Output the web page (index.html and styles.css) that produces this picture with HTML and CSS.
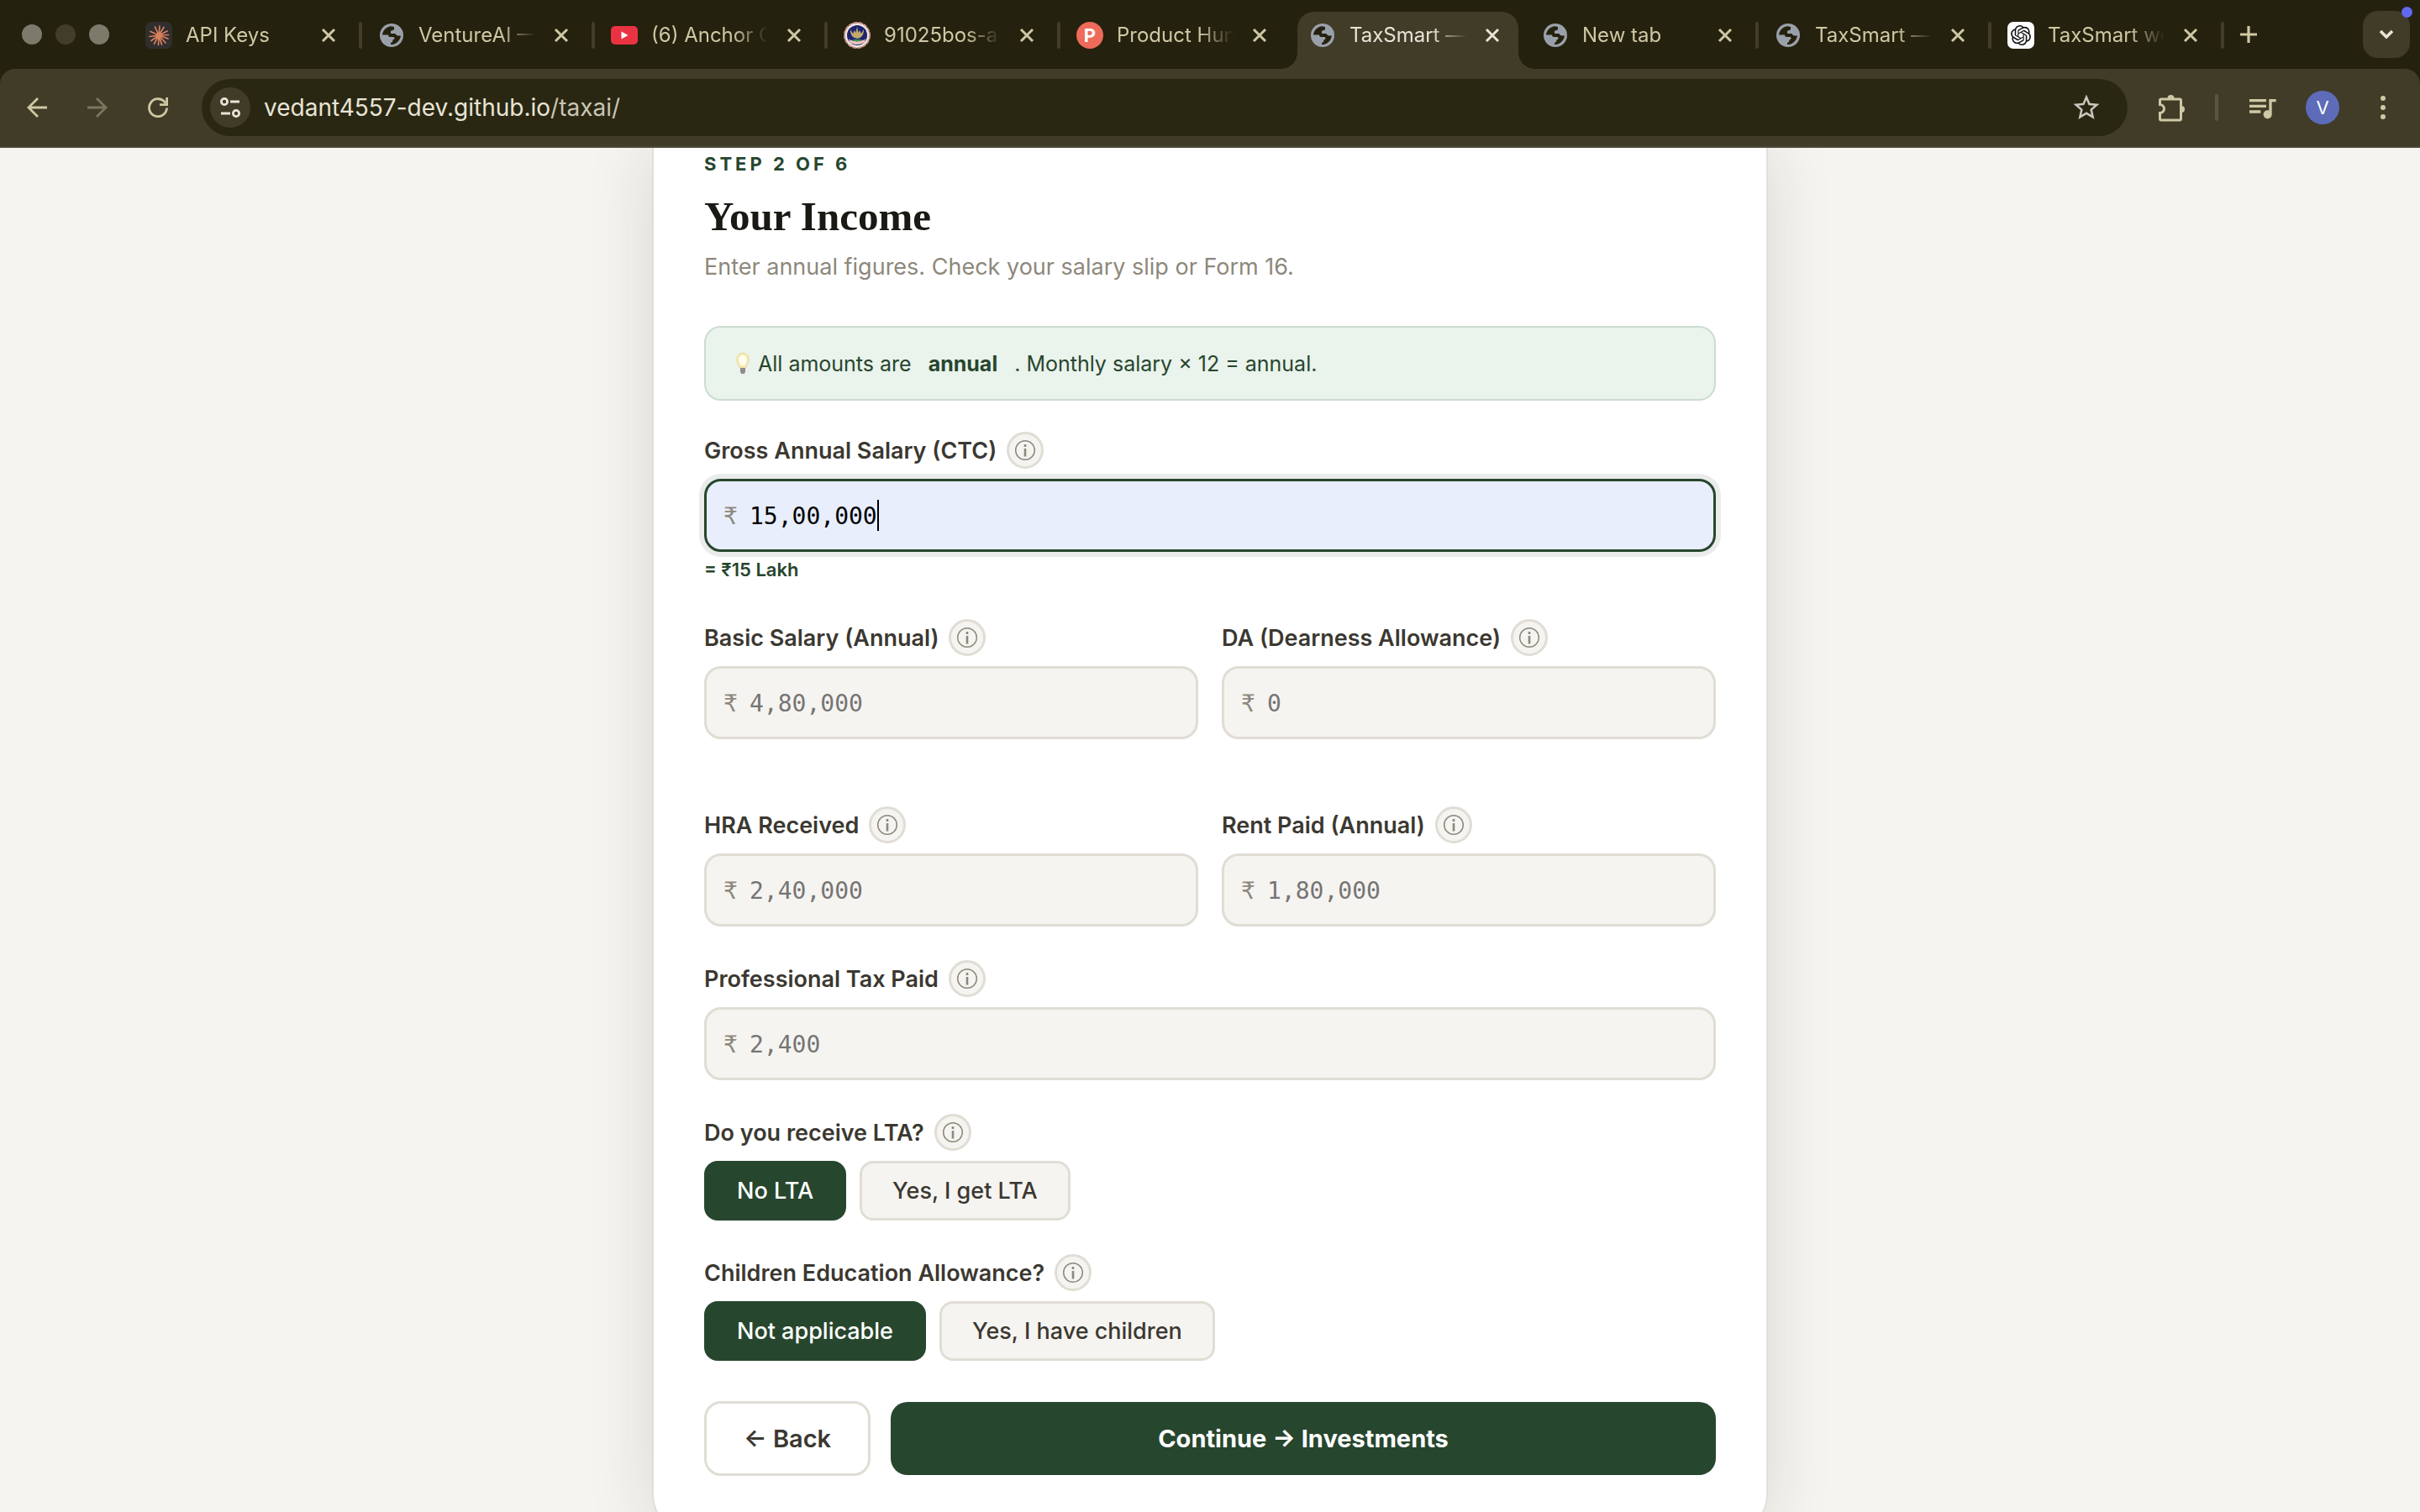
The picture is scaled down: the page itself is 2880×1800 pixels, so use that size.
FILE: index.html
```
<!DOCTYPE html>
<html lang="en">
<head>
<meta charset="utf-8">
<title>TaxSmart — Your Income</title>
<link rel="stylesheet" href="styles.css">
</head>
<body>
<svg class="symbols" aria-hidden="true">
  <symbol id="globe" viewBox="0 0 28 28">
    <circle cx="14" cy="14" r="14" fill="#9aa0a9"/>
    <path class="sea" d="M3 13.500C3.500 8 8 3.500 13.500 3.200L17 4v2.500c0 1.200-1 1.500-2.600 1.700-1.300.2-1.400 1-1.400 2.300 0 1 .2 1.500 1.200 1.500h4.300c.6 1.500 1.500 2.500 3.500 2.500h3c-.6 5-4.500 9.600-10 10.500h-2v-2.300c2-.3 2.300-1 2.300-2.500 0-1.200 2.300-1 2.300-2.700 0-1.300-1.300-1.500-2.600-1.500H12c-1 0-2-.8-2-2.500z"/>
  </symbol>
  <symbol id="close" viewBox="0 0 28 28"><path d="M7 7l14 14M21 7L7 21" stroke="currentColor" stroke-width="3" fill="none"/></symbol>
  <symbol id="info" viewBox="0 0 26 26"><circle cx="13" cy="13" r="11.300" fill="none" stroke="currentColor" stroke-width="1.500"/><path d="M13 11v9.500M13 6v3" stroke="currentColor" stroke-width="2.600"/></symbol>
</svg>

<header class="browser">
  <div class="tabstrip">
    <div class="lights"><span></span><span class="dim"></span><span></span></div>
    <nav class="tabs" aria-label="Tabs">
      <div class="tab">
        <svg class="favicon" viewBox="0 0 32 32"><rect width="32" height="32" rx="7" fill="#302f2e"/><g stroke="#d9805f" stroke-width="1.700" stroke-linecap="round"><path d="M16 16L17 5M16 16L22 6.500M16 16L26 11M16 16L27.500 15.500M16 16L27 20M16 16L24 25M16 16L19.500 27M16 16L15.500 27.500M16 16L10.500 26M16 16L7 22.500M16 16L5 17.500M16 16L6 11.500M16 16L11.500 6"/></g><circle cx="16" cy="16" r="3" fill="#d9805f"/></svg>
        <span class="tab-title">API Keys</span>
        <button class="tab-close" aria-label="Close tab"><svg><use href="#close"/></svg></button>
      </div>
      <div class="tab">
        <svg class="favicon globe"><use href="#globe"/></svg>
        <span class="tab-title">VentureAI —</span>
        <button class="tab-close" aria-label="Close tab"><svg><use href="#close"/></svg></button>
      </div>
      <div class="tab">
        <svg class="favicon" viewBox="0 0 32 32"><rect y="5" width="32" height="22" rx="5" fill="#ea3342"/><path d="M12.500 11.500v9l8-4.500z" fill="#fff"/></svg>
        <span class="tab-title">(6) Anchor C</span>
        <button class="tab-close" aria-label="Close tab"><svg><use href="#close"/></svg></button>
      </div>
      <div class="tab">
        <svg class="favicon" viewBox="0 0 32 32"><circle cx="16" cy="16" r="15" fill="#f3e9e6" stroke="#c99a90" stroke-width="2" stroke-dasharray="5 1"/><circle cx="16" cy="16" r="12" fill="#1c2470"/><path d="M8 9c0 6 2 10 8 11 6-1 8-5 8-11l-3 5-2-4-1.500 3L16 5.500l-1.500 7.500-1.500-3-2 4z" fill="#c2ab6c"/><path d="M6 20c3 4 17 4 20 0l-1 4c-5 4-13 4-18 0z" fill="#eec3bb"/><path d="M10 21h12l-6 3z" fill="#3e9a50"/></svg>
        <span class="tab-title">91025bos-a</span>
        <button class="tab-close" aria-label="Close tab"><svg><use href="#close"/></svg></button>
      </div>
      <div class="tab before-active">
        <span class="favicon hunt">P</span>
        <span class="tab-title">Product Hun</span>
        <button class="tab-close" aria-label="Close tab"><svg><use href="#close"/></svg></button>
      </div>
      <div class="tab active">
        <svg class="favicon globe"><use href="#globe"/></svg>
        <span class="tab-title">TaxSmart —</span>
        <button class="tab-close" aria-label="Close tab"><svg><use href="#close"/></svg></button>
      </div>
      <div class="tab">
        <svg class="favicon globe"><use href="#globe"/></svg>
        <span class="tab-title">New tab</span>
        <button class="tab-close" aria-label="Close tab"><svg><use href="#close"/></svg></button>
      </div>
      <div class="tab">
        <svg class="favicon globe"><use href="#globe"/></svg>
        <span class="tab-title">TaxSmart —</span>
        <button class="tab-close" aria-label="Close tab"><svg><use href="#close"/></svg></button>
      </div>
      <div class="tab">
        <svg class="favicon" viewBox="0 0 32 32"><rect width="32" height="32" rx="7" fill="#fff"/><svg x="4" y="4" width="24" height="24" viewBox="0 0 24 24"><path fill="#111" d="M22.2819 9.8211a5.9847 5.9847 0 0 0-.5157-4.9108 6.0462 6.0462 0 0 0-6.5098-2.9A6.0651 6.0651 0 0 0 4.9807 4.1818a5.9847 5.9847 0 0 0-3.9977 2.9 6.0462 6.0462 0 0 0 .7427 7.0966 5.98 5.98 0 0 0 .511 4.9107 6.051 6.051 0 0 0 6.5146 2.9001A5.9847 5.9847 0 0 0 13.2599 24a6.0557 6.0557 0 0 0 5.7718-4.2058 5.9894 5.9894 0 0 0 3.9977-2.9001 6.0557 6.0557 0 0 0-.7475-7.0729zm-9.022 12.6081a4.4755 4.4755 0 0 1-2.8764-1.0408l.1419-.0804 4.7783-2.7582a.7948.7948 0 0 0 .3927-.6813v-6.7369l2.02 1.1686a.071.071 0 0 1 .038.052v5.5826a4.504 4.504 0 0 1-4.4945 4.4944zm-9.6607-4.1254a4.4708 4.4708 0 0 1-.5346-3.0137l.142.0852 4.783 2.7582a.7712.7712 0 0 0 .7806 0l5.8428-3.3685v2.3324a.0804.0804 0 0 1-.0332.0615L9.74 19.9502a4.4992 4.4992 0 0 1-6.1408-1.6464zM2.3408 7.8956a4.485 4.485 0 0 1 2.3655-1.9728V11.6a.7664.7664 0 0 0 .3879.6765l5.8144 3.3543-2.0201 1.1685a.0757.0757 0 0 1-.071 0l-4.8303-2.7865A4.504 4.504 0 0 1 2.3408 7.872zm16.5963 3.8558L13.1038 8.364 15.1192 7.2a.0757.0757 0 0 1 .071 0l4.8303 2.7913a4.4944 4.4944 0 0 1-.6765 8.1042v-5.6772a.79.79 0 0 0-.407-.667zm2.0107-3.0231l-.142-.0852-4.7735-2.7818a.7759.7759 0 0 0-.7854 0L9.409 9.2297V6.8974a.0662.0662 0 0 1 .0284-.0615l4.8303-2.7866a4.4992 4.4992 0 0 1 6.6802 4.66zM8.3065 12.863l-2.02-1.1638a.0804.0804 0 0 1-.038-.0567V6.0742a4.4992 4.4992 0 0 1 7.3757-3.4537l-.142.0805L8.704 5.459a.7948.7948 0 0 0-.3927.6813zm1.0976-2.3654l2.602-1.4998 2.6069 1.4998v2.9994l-2.5974 1.4997-2.6067-1.4997Z"/></svg></svg>
        <span class="tab-title">TaxSmart we</span>
        <button class="tab-close" aria-label="Close tab"><svg><use href="#close"/></svg></button>
      </div>
    </nav>
    <button class="new-tab" aria-label="New tab"><svg viewBox="0 0 24 24"><path d="M12 2v20M2 12h20" stroke="currentColor" stroke-width="3.200"/></svg></button>
    <button class="tab-search" aria-label="Search tabs"><svg viewBox="0 0 20 20"><path d="M3 6l7 7 7-7" stroke="currentColor" stroke-width="3.600" fill="none"/></svg></button>
  </div>

  <div class="toolbar">
    <div class="nav-buttons">
      <button class="tool" aria-label="Back"><svg viewBox="0 0 24 24"><path d="M24 12H2M13 1L2 12l11 11" fill="none" stroke="currentColor" stroke-width="2.800"/></svg></button>
      <button class="tool faded" aria-label="Forward"><svg viewBox="0 0 24 24"><path d="M0 12h22M11 1l11 11-11 11" fill="none" stroke="currentColor" stroke-width="2.800"/></svg></button>
      <button class="tool" aria-label="Reload"><svg viewBox="0 0 24 24"><path d="M22.500 12.500A10.500 10.500 0 1 1 21 6.800" fill="none" stroke="currentColor" stroke-width="2.800"/><path d="M14 8.600h8.600V0" fill="none" stroke="currentColor" stroke-width="2.800"/></svg></button>
    </div>
    <div class="omnibox">
      <button class="site-info" aria-label="Site information"><svg viewBox="0 0 26 26" fill="none" stroke="currentColor" stroke-width="2.800"><circle cx="6" cy="6" r="3.600"/><path d="M13 6h11M2 20h11"/><circle cx="20" cy="20" r="3.600"/></svg></button>
      <a class="url" href="#">vedant4557-dev.github.io<span>/taxai/</span></a>
      <button class="star" aria-label="Bookmark"><svg viewBox="1 1 22 22"><path fill="currentColor" d="M22 9.240l-7.190-.62L12 2 9.190 8.630 2 9.240l5.460 4.730L5.820 21 12 17.270 18.180 21l-1.630-7.030L22 9.240zM12 15.400l-3.760 2.270 1-4.280-3.320-2.880 4.380-.38L12 6.100l1.710 4.040 4.380.38-3.320 2.880 1 4.280L12 15.400z"/></svg></button>
    </div>
    <button class="tool" aria-label="Extensions"><svg class="ext" viewBox="0 0 34 34"><path d="M5 7h22a1.500 1.500 0 0 1 1.500 1.500v22A1.500 1.500 0 0 1 27 32H5a1.500 1.500 0 0 1-1.500-1.500V23.500a5 5 0 0 0 0-10V8.500A1.500 1.500 0 0 1 5 7z" fill="none" stroke="currentColor" stroke-width="3"/><path d="M12.500 6a4 4 0 0 1 8 0zM29 15a4 4 0 0 1 0 8z" fill="currentColor"/></svg></button>
    <span class="divider"></span>
    <button class="tool" aria-label="Media"><svg class="media" viewBox="2 3 20 18"><path fill="currentColor" d="M15 6H3v2h12V6zm0 4H3v2h12v-2zM3 16h8v-2H3v2zM17 6v8.180c-.31-.11-.65-.18-1-.18-1.660 0-3 1.340-3 3s1.340 3 3 3 3-1.340 3-3V8h3V6h-5z"/></svg></button>
    <button class="avatar">V</button>
    <button class="tool" aria-label="Menu"><svg class="dots" viewBox="0 0 8 28"><g fill="currentColor"><circle cx="4" cy="3" r="3"/><circle cx="4" cy="14" r="3"/><circle cx="4" cy="25" r="3"/></g></svg></button>
  </div>
</header>

<main class="page">
  <form class="card">
    <p class="step">STEP 2 OF 6</p>
    <h1>Your Income</h1>
    <p class="lead">Enter annual figures. Check your salary slip or Form 16.</p>

    <div class="notice">
      <span class="notice-item"><svg class="bulb" viewBox="0 0 16 26"><path d="M8 .5C3.500.5 1 4 1 8c0 4 3 6 3.500 10h7C12 14 15 12 15 8c0-4-2.500-7.500-7-7.500z" fill="#fbeeb6" stroke="#e6d48e"/><ellipse cx="8" cy="9" rx="4.500" ry="6" fill="#fffdf0"/><path d="M5 18h6v5l-1.500 2h-3L5 23z" fill="#8f8e8c"/></svg> All amounts are</span>
      <strong>annual</strong>
      <span>. Monthly salary × 12 = annual.</span>
    </div>

    <div class="field">
      <div class="label-row"><label for="gross">Gross Annual Salary (CTC)</label><button type="button" class="info" aria-label="About gross salary"><svg><use href="#info"/></svg></button></div>
      <div class="money focused"><span class="rupee">₹</span><input id="gross" type="text" value="15,00,000"><span class="caret"></span></div>
      <p class="hint">= ₹15 Lakh</p>
    </div>

    <div class="pair">
      <div class="field">
        <div class="label-row"><label for="basic">Basic Salary (Annual)</label><button type="button" class="info" aria-label="About basic salary"><svg><use href="#info"/></svg></button></div>
        <div class="money"><span class="rupee">₹</span><input id="basic" type="text" placeholder="4,80,000"></div>
        <p class="hint"></p>
      </div>
      <div class="field">
        <div class="label-row"><label for="da">DA (Dearness Allowance)</label><button type="button" class="info" aria-label="About dearness allowance"><svg><use href="#info"/></svg></button></div>
        <div class="money"><span class="rupee">₹</span><input id="da" type="text" placeholder="0"></div>
      </div>
    </div>

    <div class="pair">
      <div class="field">
        <div class="label-row"><label for="hra">HRA Received</label><button type="button" class="info" aria-label="About HRA"><svg><use href="#info"/></svg></button></div>
        <div class="money"><span class="rupee">₹</span><input id="hra" type="text" placeholder="2,40,000"></div>
      </div>
      <div class="field">
        <div class="label-row"><label for="rent">Rent Paid (Annual)</label><button type="button" class="info" aria-label="About rent paid"><svg><use href="#info"/></svg></button></div>
        <div class="money"><span class="rupee">₹</span><input id="rent" type="text" placeholder="1,80,000"></div>
      </div>
    </div>

    <div class="field">
      <div class="label-row"><label for="ptax">Professional Tax Paid</label><button type="button" class="info" aria-label="About professional tax"><svg><use href="#info"/></svg></button></div>
      <div class="money"><span class="rupee">₹</span><input id="ptax" type="text" placeholder="2,400"></div>
    </div>

    <div class="field" role="group" aria-labelledby="lta-label">
      <div class="label-row"><span class="label" id="lta-label">Do you receive LTA?</span><button type="button" class="info" aria-label="About LTA"><svg><use href="#info"/></svg></button></div>
      <div class="choices"><button type="button" class="choice selected">No LTA</button><button type="button" class="choice">Yes, I get LTA</button></div>
    </div>

    <div class="field" role="group" aria-labelledby="cea-label">
      <div class="label-row"><span class="label" id="cea-label">Children Education Allowance?</span><button type="button" class="info" aria-label="About education allowance"><svg><use href="#info"/></svg></button></div>
      <div class="choices"><button type="button" class="choice selected">Not applicable</button><button type="button" class="choice">Yes, I have children</button></div>
    </div>

    <div class="actions"><button type="button" class="back">← Back</button><button type="submit" class="next">Continue → Investments</button></div>
  </form>
</main>
</body>
</html>
```
FILE: styles.css
```
* { box-sizing: border-box; }
body {
  margin: 0;
  height: 100vh;
  display: flex;
  flex-direction: column;
  font-family: Inter, "Liberation Sans", sans-serif;
  background: #f6f4f0;
  color: #3b3831;
}
button {
  font-family: inherit;
  padding: 0;
  border: 0;
  background: none;
  color: inherit;
}
p, h1 { margin: 0; }
svg { display: block; }
.symbols { position: absolute; width: 0; height: 0; }

/* Browser frame */
.browser { background: #24210e; color: #cfc8a4; flex: none; }
.tabstrip {
  height: 82px;
  display: flex;
  align-items: center;
  padding: 0 12px 0 26px;
}
.lights { display: flex; gap: 16px; margin-right: 23px; }
.lights span { width: 24px; height: 24px; border-radius: 50%; background: #7d7a6c; }
.lights .dim { background: #413d2a; }
.tabs { display: flex; flex: 0 1 2493px; min-width: 0; align-self: stretch; }
.tab {
  position: relative;
  flex: 1 1 0;
  min-width: 0;
  display: flex;
  align-items: center;
  padding: 2px 25px 0 20px;
  font-size: 24px;
}
.tab::after {
  content: "";
  position: absolute;
  right: -1px;
  top: 26px;
  width: 4px;
  height: 32px;
  border-radius: 2px;
  background: #413d2a;
}
.before-active::after { display: none; }
.tab > * { position: relative; }
.favicon { flex: none; width: 32px; height: 32px; margin-right: 16px; }
.globe { padding: 2px; }
.sea { fill: #24210e; }
.hunt {
  border-radius: 50%;
  background: #ee6a5b;
  color: #fff;
  font-size: 22px;
  font-weight: 700;
  line-height: 32px;
  text-align: center;
}
.tab-title {
  flex: 1;
  overflow: hidden;
  white-space: nowrap;
  margin-right: 17px;
  line-height: 32px;
  -webkit-mask-image: linear-gradient(to right, #000 70%, transparent);
  mask-image: linear-gradient(to right, #000 70%, transparent);
}
.tab-close, .tab-close svg { width: 28px; height: 28px; }
.active { color: #e8e4d8; }
.active::before {
  content: "";
  position: absolute;
  inset: 14px 8px 0 6px;
  border-radius: 20px 20px 0 0;
  background: #413c28;
}
.active::after {
  top: auto;
  bottom: 0;
  left: -14px;
  right: -12px;
  width: auto;
  height: 20px;
  border-radius: 0;
  background:
    radial-gradient(circle at 0 0, transparent 20px, #413c28 20px) left / 20px 20px no-repeat,
    radial-gradient(circle at 100% 0, transparent 20px, #413c28 20px) right / 20px 20px no-repeat;
}
.new-tab { margin-left: 18px; }
.new-tab svg { width: 24px; height: 24px; }
.tab-search {
  position: relative;
  margin-left: auto;
  width: 56px;
  height: 56px;
  border-radius: 18px;
  background: #413c28;
  color: #e8e4d8;
  display: grid;
  place-items: center;
}
.tab-search svg { width: 20px; height: 20px; }
.tab-search::after {
  content: "";
  position: absolute;
  top: -5px;
  right: -3px;
  width: 13px;
  height: 13px;
  border-radius: 50%;
  background: #6268ee;
}
.toolbar {
  height: 94px;
  display: flex;
  align-items: center;
  gap: 28px;
  padding: 0 20px;
  background: #413c28;
  border-bottom: 2px solid #4c4839;
  border-radius: 18px 18px 0 0;
}
.nav-buttons { display: flex; gap: 24px; }
.tool { flex: none; width: 48px; height: 48px; display: grid; place-items: center; }
.tool svg { width: 24px; height: 24px; }
.tool .ext { width: 34px; height: 34px; }
.tool .media { width: 34px; height: 30px; }
.tool .dots { width: 8px; height: 28px; }
.faded { color: #7c765d; }
.omnibox {
  flex: 1;
  min-width: 0;
  height: 68px;
  display: flex;
  align-items: center;
  padding: 0 32px 0 10px;
  border-radius: 34px;
  background: #292711;
}
.site-info {
  width: 48px;
  height: 48px;
  border-radius: 50%;
  background: #413c28;
  color: #e8e4d8;
  display: grid;
  place-items: center;
}
.site-info svg { width: 26px; height: 26px; }
.url {
  flex: 1;
  margin-left: 16px;
  font-size: 28px;
  color: #e8e4d8;
  text-decoration: none;
}
.url span { color: #c9c5b4; }
.star { color: #ccc8bf; }
.star svg { width: 34px; height: 34px; }
.divider { width: 4px; height: 32px; border-radius: 2px; background: #5a553f; }
.avatar {
  flex: none;
  width: 40px;
  height: 40px;
  border-radius: 50%;
  background: #5d6bb8;
  color: #fff;
  font-size: 22px;
}

/* Form */
.page {
  flex: 1;
  min-height: 0;
  overflow-y: auto;
  scrollbar-width: none;
  display: flex;
  justify-content: center;
  align-items: flex-start;
}
.card {
  width: 1328px;
  max-width: 100%;
  padding: 8px 60px 62px;
  border: 2px solid #e2dfd8;
  border-top: 0;
  border-radius: 0 0 40px 40px;
  background: #fff;
  box-shadow: 0 0 80px rgba(30, 28, 20, 0.13);
}
.step {
  font-size: 22px;
  line-height: 22px;
  font-weight: 700;
  letter-spacing: 4px;
  color: #27462e;
}
h1 {
  margin-top: 24px;
  font-family: "Liberation Serif", serif;
  font-size: 49px;
  line-height: 56px;
  font-weight: 700;
  color: #1a1914;
}
.lead { margin-top: 16px; font-size: 27px; line-height: 32px; color: #8d887c; }
.notice {
  margin: 54px 0 37px;
  height: 89px;
  display: flex;
  align-items: center;
  gap: 20px;
  padding: 0 34px;
  border: 2px solid #cddcd1;
  border-radius: 20px;
  background: #eaf3ec;
  color: #27462e;
  font-size: 25px;
}
.notice-item { display: flex; align-items: center; gap: 10px; }
.bulb { width: 16px; height: 26px; margin-left: 2px; }
.field { margin-bottom: 40px; }
.pair { display: grid; grid-template-columns: 1fr 1fr; gap: 28px; }
.label-row { display: flex; align-items: center; gap: 12px; height: 44px; margin-bottom: 12px; }
label, .label { font-size: 27px; font-weight: 600; }
.info {
  width: 44px;
  height: 44px;
  border: 3px solid #e0ddd5;
  border-radius: 50%;
  background: #f6f4f0;
  color: #8d887c;
  display: grid;
  place-items: center;
}
.info svg { width: 26px; height: 26px; }
.money {
  position: relative;
  height: 87px;
  display: flex;
  align-items: center;
  padding: 2px 0 0 20px;
  border: 3px solid #e0ddd5;
  border-radius: 20px;
  background: #f6f4f0;
  font-family: "DejaVu Sans Mono", monospace;
  font-size: 28px;
}
.rupee { width: 31px; color: #8d887c; }
.money input {
  flex: 1;
  min-width: 0;
  padding: 0;
  border: 0;
  outline: 0;
  background: none;
  font: inherit;
  color: #000;
}
.money input::placeholder { color: #757575; opacity: 1; }
.focused { border-color: #27462e; background: #e8eefc; box-shadow: 0 0 0 6px #e9ecea; }
.caret { position: absolute; left: calc(51px + 9ch); top: 22px; width: 2px; height: 37px; background: #000; }
.hint { height: 40px; font-size: 22px; line-height: 42px; font-weight: 600; color: #27462e; }
.choices { display: flex; gap: 16px; }
.choice {
  height: 71px;
  padding: 0 36px;
  border: 3px solid #e0ddd5;
  border-radius: 16px;
  background: #f6f4f0;
  font-size: 27px;
  font-weight: 500;
}
.choice.selected { background: #27462e; border-color: #27462e; color: #fff; }
.actions { display: flex; align-items: center; gap: 24px; margin-top: 48px; }
.back {
  width: 198px;
  height: 89px;
  border: 3px solid #e0ddd5;
  border-radius: 20px;
  font-size: 29px;
  font-weight: 600;
}
.next {
  flex: 1;
  height: 87px;
  border-radius: 20px;
  background: #27462e;
  color: #fff;
  font-size: 29px;
  font-weight: 700;
}
.active .sea { fill: #413c28; }
```
